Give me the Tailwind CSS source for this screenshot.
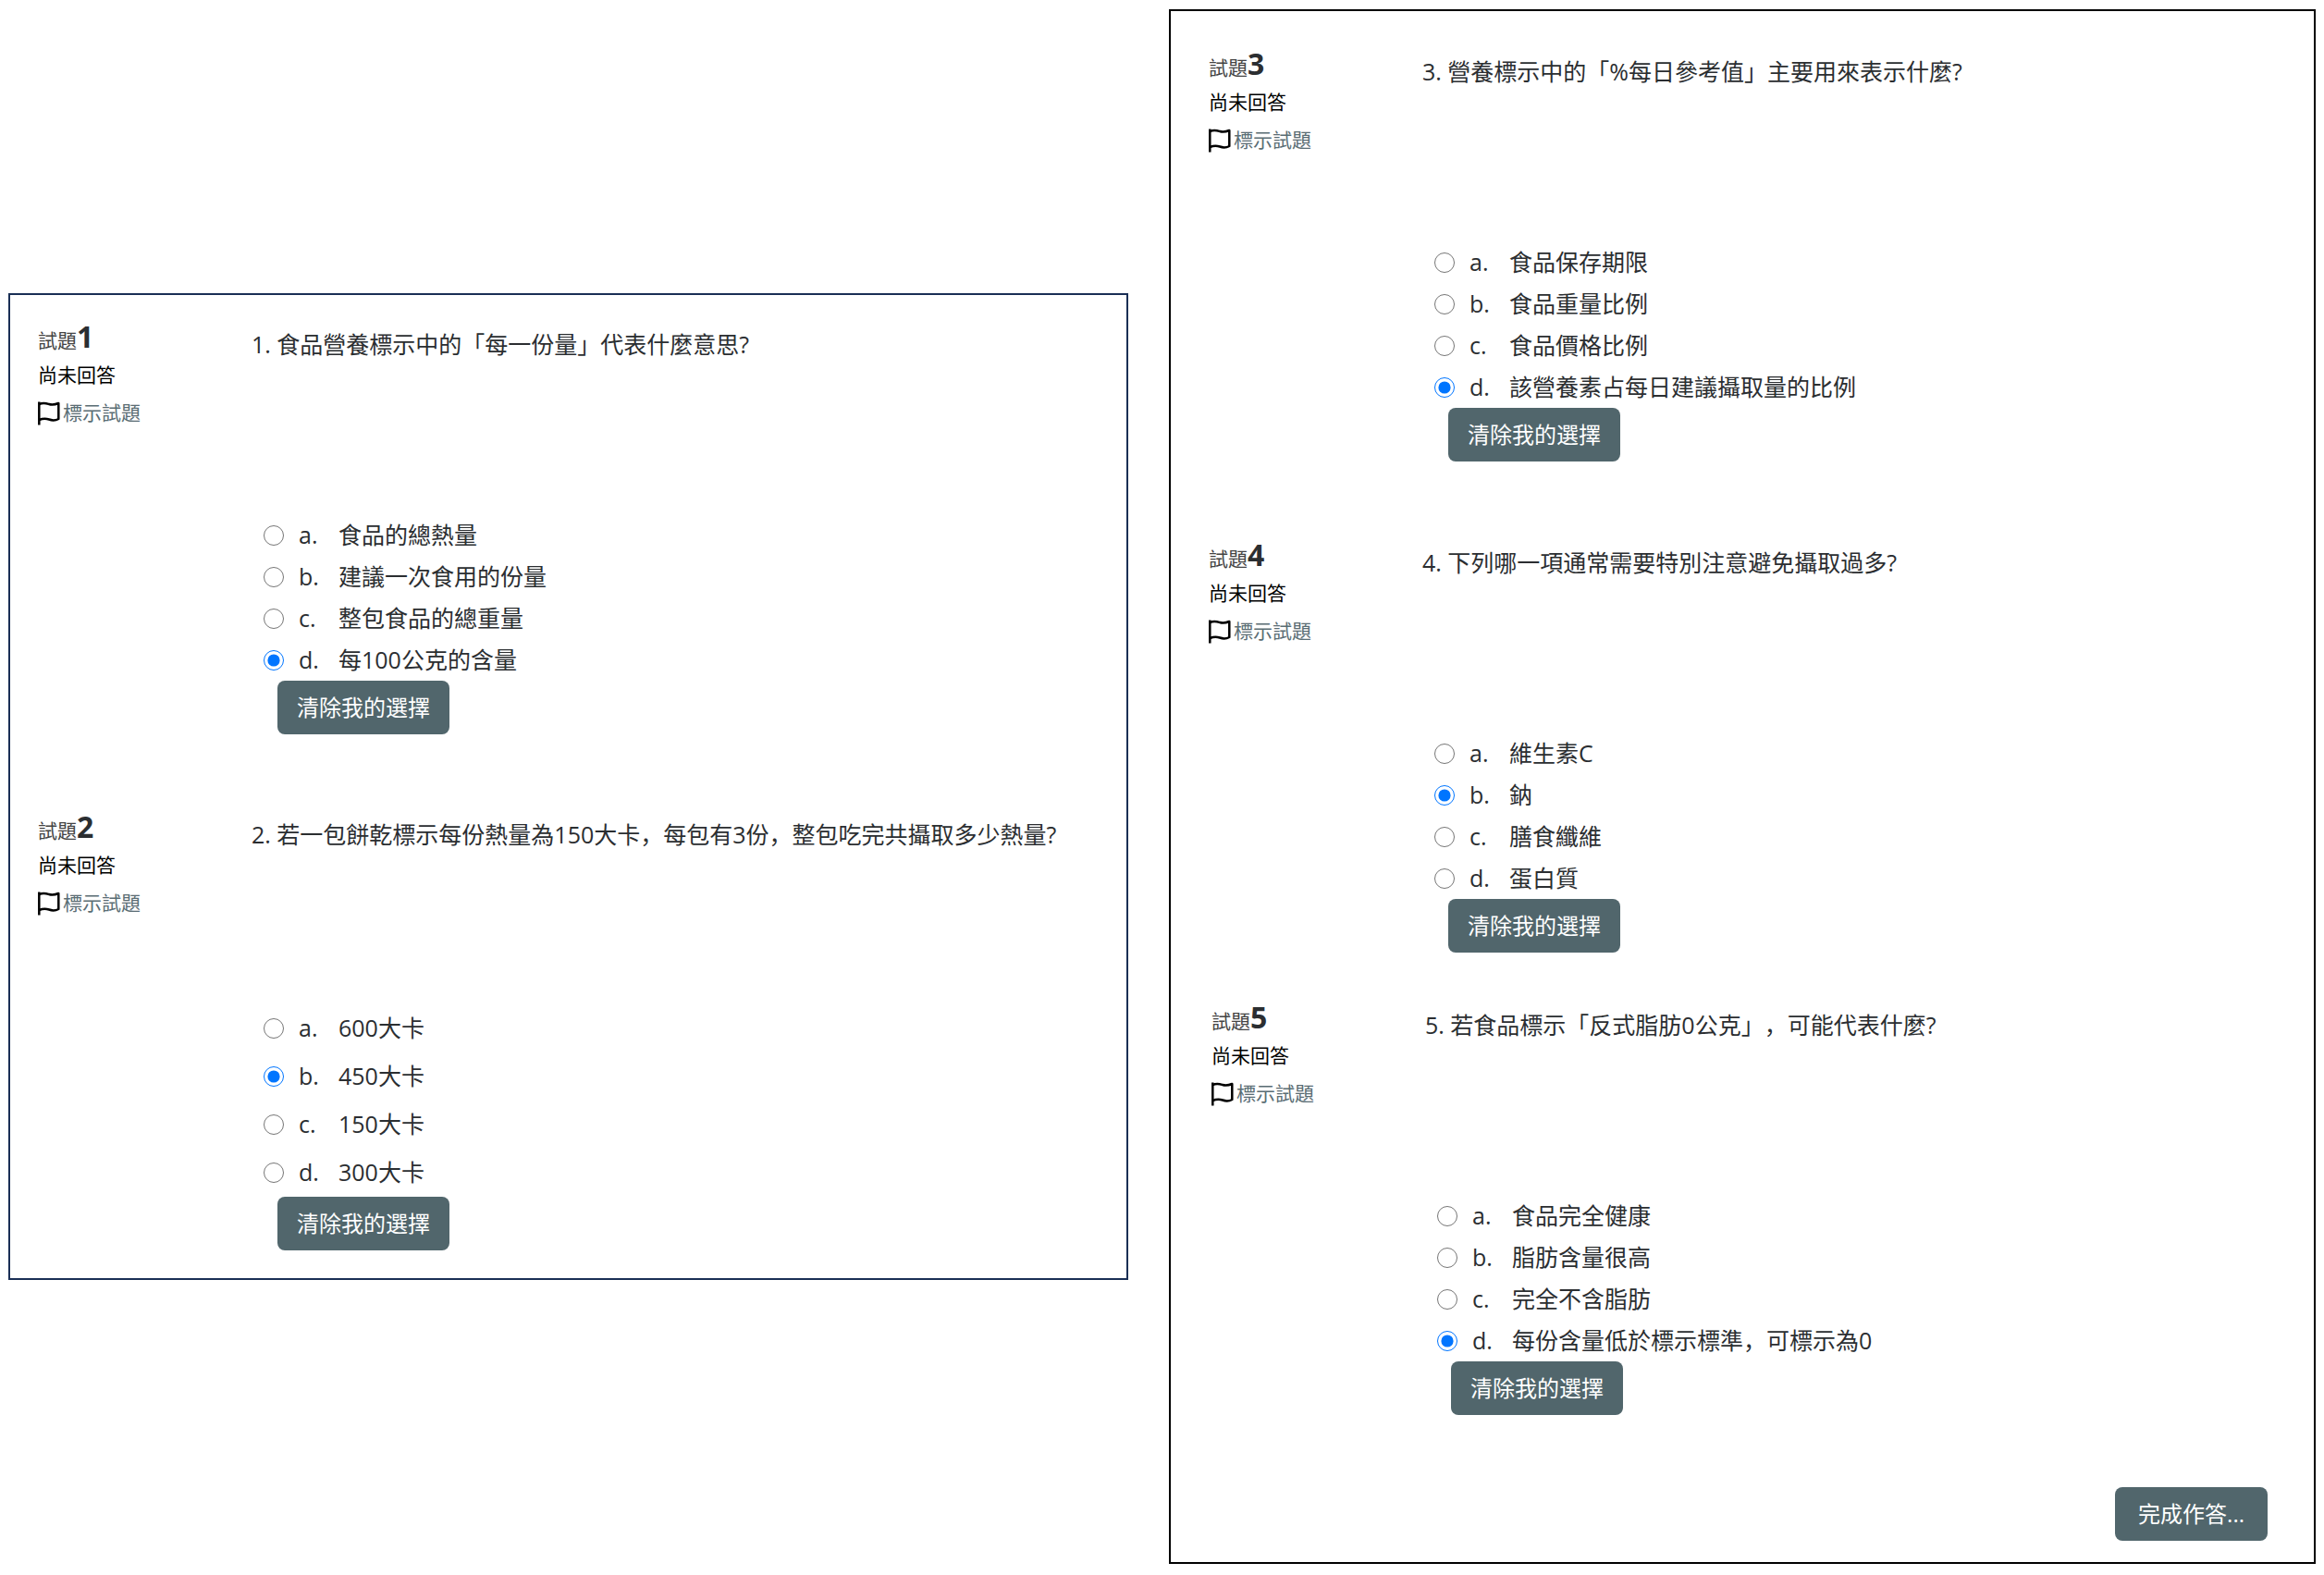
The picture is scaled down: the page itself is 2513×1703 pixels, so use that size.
<!DOCTYPE html>
<html lang="zh">
<head>
    <meta charset="UTF-8">
    <meta name="viewport" content="width=device-width, initial-scale=1.0">
    <title>營養標示測驗</title>
    <script src="https://cdn.jsdelivr.net/npm/@tailwindcss/browser@4"></script>
</head>
<body class="bg-white font-['Open_Sans','Noto_Sans_CJK_SC',sans-serif] text-[25px] text-[#2b2e31] [text-spacing-trim:space-all]">
    <form id="quiz" class="grid grid-cols-[1211fr_1240fr] items-center gap-11 px-[9px] pt-[10px] pb-[14px]">
        <div id="page-1" class="border-2 border-[#1a2f55] pt-[25px] pb-[30px] pl-[30px]"></div>
        <div class="border-2 border-black pt-[37px] pb-[23px] pl-[41px]">
            <div id="page-2"></div>
            <div class="flex justify-end mt-[78px] pr-[50px]">
                <button type="submit" class="h-[58px] rounded-lg bg-[#51666c] px-[25px] text-2xl text-white hover:bg-[#41525a]">完成作答...</button>
            </div>
        </div>
    </form>

    <script>
        const questions = [
            { no: 1, page: 1, text: '食品營養標示中的「每一份量」代表什麼意思?', picked: 3, row: 'h-[45px]', gap: '',
              options: ['食品的總熱量', '建議一次食用的份量', '整包食品的總重量', '每100公克的含量'] },
            { no: 2, page: 1, text: '若一包餅乾標示每份熱量為150大卡，每包有3份，整包吃完共攝取多少熱量?', picked: 1, row: 'h-[52px]', gap: 'mt-[80px]',
              options: ['600大卡', '450大卡', '150大卡', '300大卡'] },
            { no: 3, page: 2, text: '營養標示中的「%每日參考值」主要用來表示什麼?', picked: 3, row: 'h-[45px]', gap: '',
              options: ['食品保存期限', '食品重量比例', '食品價格比例', '該營養素占每日建議攝取量的比例'] },
            { no: 4, page: 2, text: '下列哪一項通常需要特別注意避免攝取過多?', picked: 1, row: 'h-[45px]', gap: 'mt-[81px]',
              options: ['維生素C', '鈉', '膳食纖維', '蛋白質'] },
            { no: 5, page: 2, text: '若食品標示「反式脂肪0公克」，可能代表什麼?', picked: 3, row: 'h-[45px]', gap: 'mt-[50px] pl-[3px]',
              options: ['食品完全健康', '脂肪含量很高', '完全不含脂肪', '每份含量低於標示標準，可標示為0'] }
        ];

        questions.forEach(q => {
            const section = document.createElement('section');
            section.className = `flex ${q.gap}`;
            section.innerHTML = `
                <div class="w-[231px] shrink-0 text-[21px]">
                    <h3 class="flex h-[40px] items-baseline leading-[40px] text-[#444]">試題<span class="text-[32px] font-bold text-[#2b2e31]">${q.no}</span></h3>
                    <div class="h-[42px] leading-[42px] text-black">尚未回答</div>
                    <a href="#flag-${q.no}" class="flex h-[42px] items-center gap-[3px] text-[#5a6d74]">
                        <svg class="h-[26px] w-[24px] shrink-0" viewBox="0 0 24 26" fill="none" stroke="#000" stroke-width="2.500">
                            <path d="M1.300 0.5V25.5" />
                            <path d="M1.300 3C6 0.8 9 2 12 3C15.500 4.200 18.500 3.600 22.300 2V19C18.500 21 15.500 20.800 12 19.500C9 18.400 6 18 1.300 20" stroke-linejoin="round" />
                        </svg>
                        標示試題
                    </a>
                </div>
                <div class="min-w-0 pt-[9px]">
                    <p class="leading-[38px]">${q.no}. ${q.text}</p>
                    <div class="mt-[165px] pl-[13px]">
                        ${q.options.map((option, i) => `
                        <div class="flex items-center ${q.row}">
                            <input type="radio" id="q${q.no}-${i}" name="q${q.no}" class="size-[22px] shrink-0" ${i === q.picked ? 'checked' : ''}>
                            <label for="q${q.no}-${i}" class="flex pl-4"><span class="w-[43px] shrink-0">${'abcd'[i]}.</span>${option}</label>
                        </div>`).join('')}
                    </div>
                    <button type="button" data-clear="q${q.no}" class="ml-[28px] block h-[58px] rounded-lg bg-[#51666c] px-[21px] text-2xl text-white hover:bg-[#41525a]">清除我的選擇</button>
                </div>
            `;
            document.getElementById(`page-${q.page}`).appendChild(section);
        });

        // Clear the picked answer of one question
        document.querySelectorAll('[data-clear]').forEach(button => {
            button.addEventListener('click', () => {
                document.querySelectorAll(`input[name="${button.dataset.clear}"]`).forEach(input => {
                    input.checked = false;
                });
            });
        });
    </script>
</body>
</html>
